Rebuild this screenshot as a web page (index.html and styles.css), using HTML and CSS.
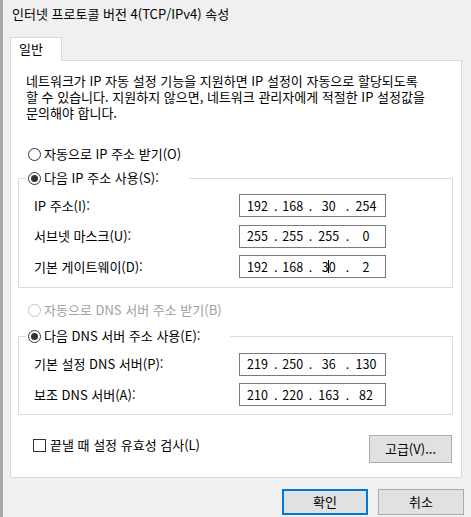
FILE: index.html
```html
<!DOCTYPE html>
<html lang="ko">
<head>
<meta charset="utf-8">
<title>인터넷 프로토콜 버전 4(TCP/IPv4) 속성</title>
<link rel="stylesheet" href="styles.css">
</head>
<body>
<div class="win">
  <div class="title">인터넷 프로토콜 버전 4(TCP/IPv4) 속성</div>
  <div class="tabs"><div class="tab">일반</div></div>
  <div class="panel">
    <div class="desc">
      <div class="dl">네트워크가 IP 자동 설정 기능을 지원하면 IP 설정이 자동으로 할당되도록</div>
      <div class="dl">할 수 있습니다. 지원하지 않으면, 네트워크 관리자에게 적절한 IP 설정값을</div>
      <div class="dl">문의해야 합니다.</div>
    </div>
    <div class="opt r1"><span class="radio"></span>자동으로 IP 주소 받기(O)</div>
    <fieldset class="grp g1">
      <legend><span class="opt"><span class="radio on"></span>다음 IP 주소 사용(S):</span></legend>
      <div class="rows">
        <span class="lbl">IP 주소(I):</span>
        <div class="ip"><span>192</span><span>.</span><span>168</span><span>.</span><span>30</span><span>.</span><span>254</span></div>
        <span class="lbl">서브넷 마스크(U):</span>
        <div class="ip"><span>255</span><span>.</span><span>255</span><span>.</span><span>255</span><span>.</span><span>0</span></div>
        <span class="lbl">기본 게이트웨이(D):</span>
        <div class="ip"><span>192</span><span>.</span><span>168</span><span>.</span><span>3<i class="caret"></i>0</span><span>.</span><span>2</span></div>
      </div>
    </fieldset>
    <div class="opt r3 disabled"><span class="radio off"></span>자동으로 DNS 서버 주소 받기(B)</div>
    <fieldset class="grp g2">
      <legend><span class="opt"><span class="radio on"></span>다음 DNS 서버 주소 사용(E):</span></legend>
      <div class="rows r2">
        <span class="lbl">기본 설정 DNS 서버(P):</span>
        <div class="ip"><span>219</span><span>.</span><span>250</span><span>.</span><span>36</span><span>.</span><span>130</span></div>
        <span class="lbl">보조 DNS 서버(A):</span>
        <div class="ip"><span>210</span><span>.</span><span>220</span><span>.</span><span>163</span><span>.</span><span>82</span></div>
      </div>
    </fieldset>
    <div class="bottom">
      <div class="opt chk"><span class="box"></span>끝낼 때 설정 유효성 검사(L)</div>
      <button class="btn adv">고급(V)...</button>
    </div>
  </div>
  <div class="actions">
    <button class="btn dlg default">확인</button>
    <button class="btn dlg">취소</button>
  </div>
</div>
</body>
</html>
```

FILE: styles.css
```css
html, body {
  margin: 0;
  padding: 0;
  background: #f0f0f0;
}
body {
  font-family: "Noto Sans CJK KR", sans-serif;
  font-size: 13px;
  color: #000;
}
.win {
  width: 471px;
  height: 517px;
  box-sizing: border-box;
  border-left: 3px solid #a8a8a8;
  overflow: hidden;
}
.title {
  height: 37px;
  line-height: 27px;
  padding-left: 9px;
  font-size: 13px;
}
.tabs {
  display: flex;
  padding-left: 7px;
  position: relative;
  z-index: 1;
}
.tab {
  width: 52px;
  height: 24px;
  box-sizing: border-box;
  border: 1px solid #d9d9d9;
  border-bottom: none;
  background: #fff;
  padding-left: 8px;
  line-height: 21px;
  margin-bottom: -1px;
}
.panel {
  margin-left: 7px;
  width: 452px;
  height: 418px;
  box-sizing: border-box;
  border: 1px solid #d9d9d9;
  background: #fff;
  padding: 0 8px 0 7px;
}
.desc {
  margin: 12px 0 0;
  padding-left: 8px;
}
.dl {
  height: 16px;
  line-height: 16px;
  white-space: nowrap;
}
.opt {
  display: flex;
  align-items: center;
  height: 16px;
  line-height: 16px;
  white-space: nowrap;
}
.r1 {
  margin-top: 25px;
  padding-left: 10px;
}
.r3 {
  margin-top: 14px;
  padding-left: 10px;
}
.disabled {
  color: #a0a0a0;
}
.radio {
  flex: none;
  width: 13px;
  height: 13px;
  box-sizing: border-box;
  border: 1px solid #333;
  border-radius: 50%;
  background: #fff;
  display: flex;
  align-items: center;
  justify-content: center;
  margin-right: 3px;
}
.radio.on::after {
  content: "";
  width: 7px;
  height: 7px;
  border-radius: 50%;
  background: #333;
}
.radio.off {
  border-color: #c4c4c4;
}
.grp {
  margin: 8px 0 0;
  padding: 0;
  border: 1px solid #dcdcdc;
  min-width: 0;
}
.g2 {
  margin-top: 10px;
}
.grp legend {
  margin-left: 7px;
  padding: 0 30px 0 2px;
  background: #fff;
}
.rows {
  display: grid;
  grid-template-columns: 205px 147px;
  row-gap: 7.5px;
  align-items: center;
  padding: 8px 15px 9px;
}
.rows.r2 {
  padding: 8.5px 15px 8px;
}
.lbl {
  line-height: 16px;
  white-space: nowrap;
}
.ip {
  display: grid;
  grid-template-columns: 19.5px 17px 17px 18.25px 18.5px 19px 18px;
  align-items: center;
  height: 23px;
  box-sizing: border-box;
  border: 1px solid #7a7a7a;
  padding-left: 7.75px;
  line-height: 16px;
  font-size: 12.5px;
}
.ip span {
  display: flex;
  justify-content: center;
  align-items: center;
  white-space: nowrap;
}
.caret {
  display: inline-block;
  width: 1px;
  height: 13px;
  background: #000;
  margin: 0 -0.5px;
}
.bottom {
  display: flex;
  justify-content: space-between;
  align-items: flex-start;
  margin-top: 20px;
}
.chk {
  margin-top: 2px;
  padding-left: 15px;
}
.box {
  flex: none;
  width: 13px;
  height: 13px;
  box-sizing: border-box;
  border: 1px solid #333;
  background: #fff;
  margin-right: 4px;
}
.btn {
  font: inherit;
  color: #000;
  background: #e1e1e1;
  border: 1px solid #adadad;
  padding: 0;
  box-sizing: border-box;
  line-height: 16px;
}
.adv {
  width: 83px;
  height: 28px;
  margin-right: 1px;
}
.actions {
  display: flex;
  justify-content: flex-end;
  gap: 10px;
  margin-top: 11px;
  padding-right: 7px;
}
.dlg {
  width: 86px;
  height: 26px;
}
.default {
  border: 2px solid #0078d7;
}
```
